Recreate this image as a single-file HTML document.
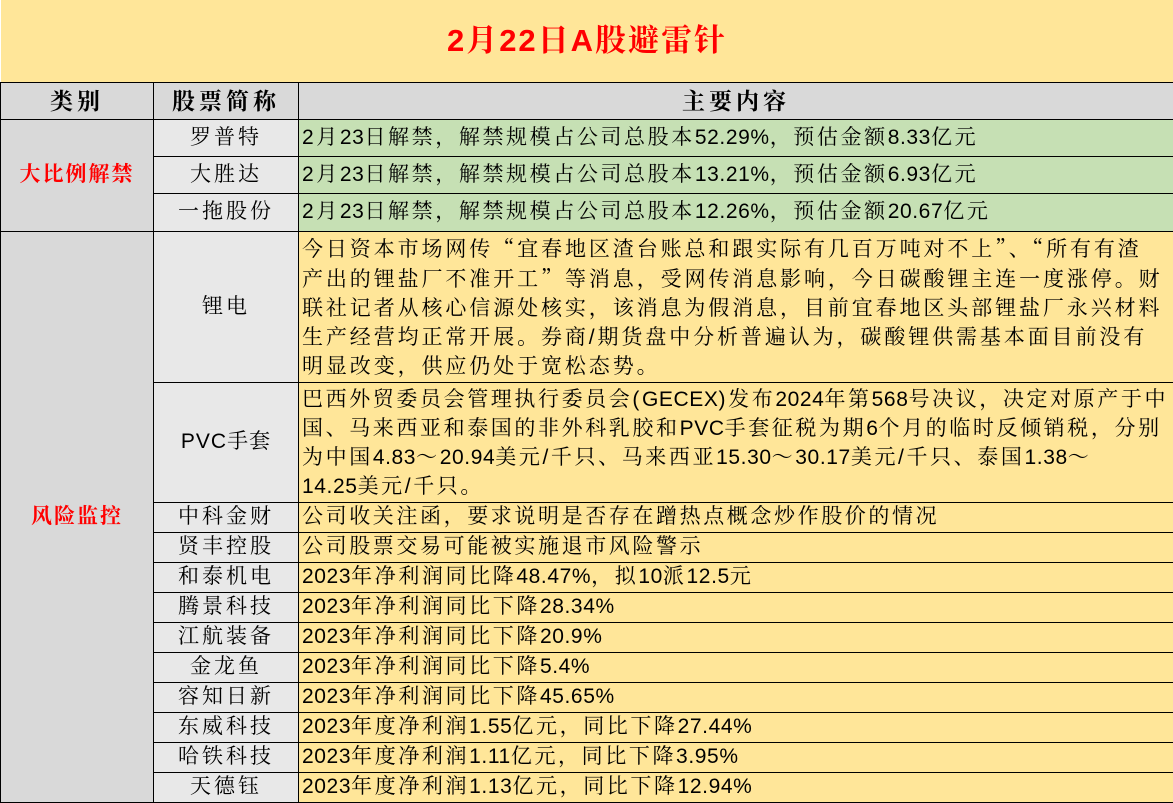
<!DOCTYPE html><html><head><meta charset="utf-8"><style>
body{margin:0;width:1173px;height:801px;overflow:hidden;background:#fff;font-family:"Liberation Sans","Noto Serif CJK SC",serif;}
table{border-collapse:collapse;table-layout:fixed;width:1173px;position:absolute;left:0;top:0}
td{border:1.5px solid #000;padding:0;font-size:21px;line-height:22px;white-space:nowrap;overflow:hidden;color:#000}
.n{text-align:center;background:#E8E8E8;letter-spacing:3px}
.t{padding-left:3px;letter-spacing:2.6px}
.g{background:#C6E0B4}.y{background:#FFE699}
.k{background:#D9D9D9;text-align:center;color:#f00;font-weight:bold;letter-spacing:2px}
.h{background:#D9D9D9;text-align:center;font-weight:bold;font-size:23px;letter-spacing:4px}
.m{vertical-align:top;padding:2px 0 0 3px;letter-spacing:2.9px;line-height:29.2px}
.q{font-family:"Noto Serif CJK SC",serif;letter-spacing:3px}
.d{letter-spacing:0.6px}
tr.s{height:30px}
</style></head><body>
<table>
<col style="width:153px"><col style="width:145px"><col style="width:875px">
<tr style="height:82px"><td colspan="3" style="border:none;border-bottom:1.5px solid #000;background:#FFE699;text-align:center;color:#f00;font-weight:bold;font-size:31px;line-height:34px;letter-spacing:2px">2月22日A股避雷针</td></tr>
<tr style="height:37px"><td class="h">类别</td><td class="h">股票简称</td><td class="h">主要内容</td></tr>
<tr style="height:37px"><td class="k" rowspan="3">大比例解禁</td><td class="n">罗普特</td><td class="t g">2月<span class="d">23</span>日解禁，解禁规模占公司总股本<span class="d">52.29%</span>，预估金额<span class="d">8.33</span>亿元</td></tr>
<tr style="height:37px"><td class="n">大胜达</td><td class="t g">2月<span class="d">23</span>日解禁，解禁规模占公司总股本<span class="d">13.21%</span>，预估金额<span class="d">6.93</span>亿元</td></tr>
<tr style="height:38px"><td class="n">一拖股份</td><td class="t g">2月<span class="d">23</span>日解禁，解禁规模占公司总股本<span class="d">12.26%</span>，预估金额<span class="d">20.67</span>亿元</td></tr>
<tr style="height:146px"><td class="k" rowspan="12">风险监控</td><td class="n">锂电</td><td class="y m">今日资本市场网传<span class="q">“</span>宜春地区渣台账总和跟实际有几百万吨对不上<span class="q">”</span>、<span class="q">“</span>所有有渣<br>产出的锂盐厂不准开工<span class="q">”</span>等消息，受网传消息影响，今日碳酸锂主连一度涨停。财<br>联社记者从核心信源处核实，该消息为假消息，目前宜春地区头部锂盐厂永兴材料<br>生产经营均正常开展。券商/期货盘中分析普遍认为，碳酸锂供需基本面目前没有<br>明显改变，供应仍处于宽松态势。</td></tr>
<tr style="height:120px"><td class="n" style="letter-spacing:1px">PVC手套</td><td class="y m" style="letter-spacing:2.6px">巴西外贸委员会管理执行委员会(<span class="d">GECEX</span>)发布<span class="d">2024</span>年第<span class="d">568</span>号决议，决定对原产于中<br>国、马来西亚和泰国的非外科乳胶和<span class="d">PVC</span>手套征税为期<span class="d">6</span>个月的临时反倾销税，分别<br>为中国<span class="d">4.83</span>～<span class="d">20.94</span>美元/千只、马来西亚<span class="d">15.30</span>～<span class="d">30.17</span>美元/千只、泰国<span class="d">1.38</span>～<br><span class="d">14.25</span>美元/千只。</td></tr>
<tr class="s"><td class="n">中科金财</td><td class="t y">公司收关注函，要求说明是否存在蹭热点概念炒作股价的情况</td></tr>
<tr class="s"><td class="n">贤丰控股</td><td class="t y">公司股票交易可能被实施退市风险警示</td></tr>
<tr class="s"><td class="n">和泰机电</td><td class="t y"><span class="d">2023</span>年净利润同比降<span class="d">48.47%</span>，拟<span class="d">10</span>派<span class="d">12.5</span>元</td></tr>
<tr class="s"><td class="n">腾景科技</td><td class="t y"><span class="d">2023</span>年净利润同比下降<span class="d">28.34%</span></td></tr>
<tr class="s"><td class="n">江航装备</td><td class="t y"><span class="d">2023</span>年净利润同比下降<span class="d">20.9%</span></td></tr>
<tr class="s"><td class="n">金龙鱼</td><td class="t y"><span class="d">2023</span>年净利润同比下降<span class="d">5.4%</span></td></tr>
<tr class="s"><td class="n">容知日新</td><td class="t y"><span class="d">2023</span>年净利润同比下降<span class="d">45.65%</span></td></tr>
<tr class="s"><td class="n">东威科技</td><td class="t y"><span class="d">2023</span>年度净利润<span class="d">1.55</span>亿元，同比下降<span class="d">27.44%</span></td></tr>
<tr class="s"><td class="n">哈铁科技</td><td class="t y"><span class="d">2023</span>年度净利润<span class="d">1.11</span>亿元，同比下降<span class="d">3.95%</span></td></tr>
<tr class="s"><td class="n">天德钰</td><td class="t y"><span class="d">2023</span>年度净利润<span class="d">1.13</span>亿元，同比下降<span class="d">12.94%</span></td></tr>
</table>
</body></html>
